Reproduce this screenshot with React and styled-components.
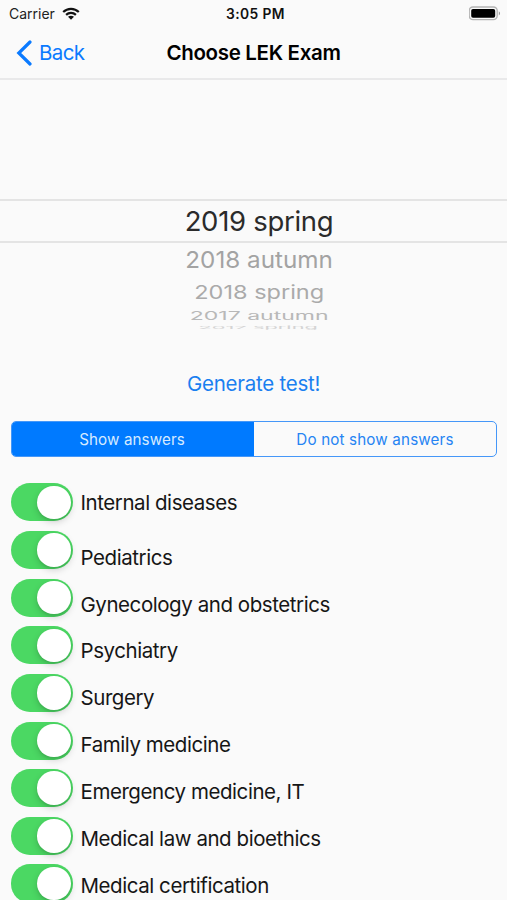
import React, { useState } from 'react';
import styled, { createGlobalStyle } from 'styled-components';

const GlobalStyle = createGlobalStyle`
  * {
    box-sizing: border-box;
  }

  body {
    margin: 0;
    overflow: hidden;
    background: #fafafa;
  }
`;

const Screen = styled.div`
  height: 900px;
  overflow: hidden;
  background: #fafafa;
  color: #111;
  font-family: Inter, 'Liberation Sans', sans-serif;
`;

const StatusBar = styled.div`
  display: grid;
  grid-template-columns: 1fr auto 1fr;
  align-items: center;
  height: 27px;
  padding: 0 5px 0 9px;
  font-size: 14px;
`;

const Carrier = styled.div`
  display: flex;
  align-items: center;
  gap: 7px;
  color: #222;
`;

const Time = styled.div`
  font-size: 13.8px;
  font-weight: 600;
  letter-spacing: 0.4px;
`;

const Battery = styled.svg`
  justify-self: end;
`;

const NavBar = styled.header`
  display: grid;
  grid-template-columns: 1fr auto 1fr;
  align-items: center;
  height: 53px;
  padding: 0 16px;
  border-bottom: 2px solid #e9e9ea;
`;

const BackButton = styled.button`
  display: flex;
  align-items: center;
  gap: 7px;
  padding: 0;
  border: none;
  background: none;
  color: #0a7aff;
  font: inherit;
  font-size: 20.5px;
  letter-spacing: -0.6px;
  cursor: pointer;
`;

const Title = styled.h1`
  margin: 0;
  color: #000;
  font-size: 20.5px;
  font-weight: 600;
  letter-spacing: -0.32px;
`;

const Picker = styled.div`
  display: flex;
  flex-direction: column;
  align-items: center;
  height: 283px;
  padding-top: 119px;
`;

const Selected = styled.div`
  width: 100%;
  height: 44px;
  padding-left: 11px;
  border-top: 2px solid #e4e4e4;
  border-bottom: 2px solid #e4e4e4;
  color: #2b2b2b;
  font-size: 27.5px;
  letter-spacing: -0.3px;
  line-height: 41px;
  text-align: center;
`;

const Option = styled.div`
  height: ${({ $height }) => $height}px;
  padding-left: 11px;
  color: ${({ $color }) => $color};
  font-size: 24px;
  line-height: ${({ $height }) => $height}px;
  white-space: nowrap;
  transform: scale(${({ $scale }) => $scale});
`;

const GenerateButton = styled.button`
  display: block;
  height: 40px;
  margin: 0 auto;
  padding: 0;
  border: none;
  background: none;
  color: #1a7ff0;
  font: inherit;
  font-size: 20.5px;
  letter-spacing: -0.25px;
  cursor: pointer;
`;

const Segmented = styled.div`
  display: grid;
  grid-template-columns: 1fr 1fr;
  height: 36px;
  margin: 18px 10px 0 11px;
  overflow: hidden;
  border: 1.5px solid #4597f8;
  border-radius: 5px;
`;

const Segment = styled.button`
  padding: 0 2px 0 0;
  border: none;
  background: ${({ $active }) => ($active ? '#007aff' : 'transparent')};
  color: ${({ $active }) => ($active ? '#d5eaff' : '#2684f3')};
  font: inherit;
  font-size: 15.2px;
  letter-spacing: 0.1px;
  cursor: pointer;

  & + & {
    padding: 0;
    letter-spacing: 0.15px;
  }
`;

const Subjects = styled.div`
  display: flex;
  gap: 7.5px;
  padding: 26.3px 0 0 11px;
`;

const Switches = styled.div`
  display: flex;
  flex-direction: column;
  gap: 9.55px;
`;

const Switch = styled.button`
  display: flex;
  align-items: center;
  justify-content: ${({ $on }) => ($on ? 'flex-end' : 'flex-start')};
  flex: none;
  width: 62px;
  height: 38.1px;
  padding: 0 2.2px;
  border: none;
  border-radius: 19px;
  background: ${({ $on }) => ($on ? '#4bd863' : '#e5e5e5')};
  cursor: pointer;
`;

const Knob = styled.span`
  width: 33.4px;
  height: 33.4px;
  border-radius: 50%;
  background: #fff;
  box-shadow: 0 3px 7px rgba(0, 0, 0, 0.17), 0 2px 2px rgba(0, 0, 0, 0.06);
`;

const Labels = styled.div`
  display: flex;
  flex-direction: column;
`;

const Label = styled.div`
  height: 46.85px;
  color: #161616;
  font-size: 20.5px;
  letter-spacing: -0.44px;
  line-height: 46.85px;
  white-space: nowrap;

  &:first-child {
    height: 51.4px;
    line-height: 39px;
  }
`;

const options = [
  { name: '2018 autumn', height: 34, color: '#a3a3a3', scale: '1.01, 0.98' },
  { name: '2018 spring', height: 32, color: '#aaa', scale: '0.98, 0.78' },
  { name: '2017 autumn', height: 15, color: '#b8b8b8', scale: '0.96, 0.46' },
  { name: '2017 spring', height: 8, color: '#d4d4d4', scale: '0.91, 0.16' },
];

const subjects = [
  'Internal diseases',
  'Pediatrics',
  'Gynecology and obstetrics',
  'Psychiatry',
  'Surgery',
  'Family medicine',
  'Emergency medicine, IT',
  'Medical law and bioethics',
  'Medical certification',
];

const WifiIcon = () => (
  <svg width="18" height="13" viewBox="0 0 18 13" fill="none" stroke="#111" strokeWidth="2.2">
    <path d="M1.2 5C5.6.7 12.4.7 16.8 5" />
    <path d="M4.1 7.9c2.8-2.6 7-2.6 9.8 0" />
    <path d="M6 9.8c1.7-1.5 4.3-1.5 6 0l-3 3z" fill="#111" stroke="none" />
  </svg>
);

const BatteryIcon = () => (
  <Battery width="33" height="15" viewBox="0 0 33 15">
    <rect x="0.2" y="1" width="28" height="12.6" rx="3.8" fill="none" stroke="#b4b4b4" strokeWidth="1.4" />
    <rect x="2.2" y="2.9" width="24" height="8.8" rx="1.8" fill="#000" />
    <path d="M29.8 5.2c1.7.8 1.7 3.4 0 4.2z" fill="#999" />
  </Battery>
);

const App = () => {
  const [showAnswers, setShowAnswers] = useState(true);
  const [enabled, setEnabled] = useState(subjects.map(() => true));

  const toggle = (index) => {
    setEnabled(enabled.map((on, i) => (i === index ? !on : on)));
  };

  return (
    <>
      <GlobalStyle />
      <Screen>
        <StatusBar>
          <Carrier>
            Carrier
            <WifiIcon />
          </Carrier>
          <Time>3:05 PM</Time>
          <BatteryIcon />
        </StatusBar>

        <NavBar>
          <BackButton>
            <svg width="16" height="26" viewBox="0 0 16 26" fill="none" stroke="#0a7aff" strokeWidth="3.2" strokeLinecap="round">
              <path d="M14 2L2.8 13 14 24" />
            </svg>
            Back
          </BackButton>
          <Title>Choose LEK Exam</Title>
        </NavBar>

        <Picker>
          <Selected>2019 spring</Selected>
          {options.map((option) => (
            <Option key={option.name} $height={option.height} $color={option.color} $scale={option.scale}>
              {option.name}
            </Option>
          ))}
        </Picker>

        <GenerateButton>Generate test!</GenerateButton>

        <Segmented>
          <Segment $active={showAnswers} onClick={() => setShowAnswers(true)}>
            Show answers
          </Segment>
          <Segment $active={!showAnswers} onClick={() => setShowAnswers(false)}>
            Do not show answers
          </Segment>
        </Segmented>

        <Subjects>
          <Switches>
            {subjects.map((subject, index) => (
              <Switch
                key={subject}
                role="switch"
                aria-checked={enabled[index]}
                aria-label={subject}
                $on={enabled[index]}
                onClick={() => toggle(index)}
              >
                <Knob />
              </Switch>
            ))}
          </Switches>
          <Labels>
            {subjects.map((subject) => (
              <Label key={subject}>{subject}</Label>
            ))}
          </Labels>
        </Subjects>
      </Screen>
    </>
  );
};

export default App;
